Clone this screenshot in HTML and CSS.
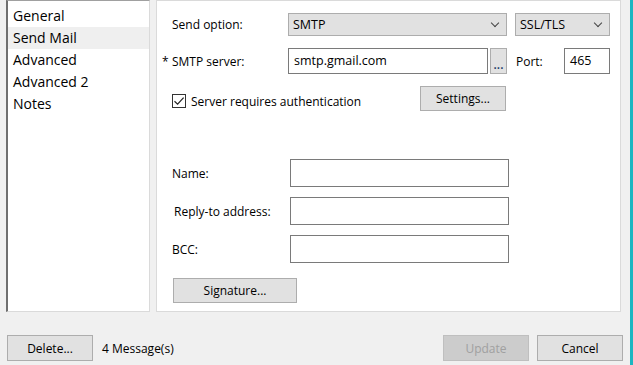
FILE: index.html
```html
<!DOCTYPE html>
<html lang="en">
<head>
    <meta charset="UTF-8">
    <title>Account Settings - Send Mail</title>
    <link rel="stylesheet" href="styles.css">
</head>
<body>

    <div class="janela">
        <div class="area-topo">
            <ul class="lista-abas">
                <li>General</li>
                <li class="ativa">Send Mail</li>
                <li>Advanced</li>
                <li>Advanced 2</li>
                <li>Notes</li>
            </ul>

            <div class="painel">
                <div class="linha linha-envio">
                    <span class="rotulo">Send option:</span>
                    <div class="combo combo-largo">SMTP <span class="seta"></span></div>
                    <div class="combo combo-ssl">SSL/TLS <span class="seta"></span></div>
                </div>

                <div class="linha linha-servidor">
                    <span class="asterisco">*</span>
                    <span class="rotulo">SMTP server:</span>
                    <div class="campo campo-servidor">smtp.gmail.com</div>
                    <button class="botao botao-pontos">...</button>
                    <span class="rotulo-porta">Port:</span>
                    <div class="campo campo-porta">465</div>
                </div>

                <div class="linha linha-auth">
                    <label class="checagem">
                        <span class="caixa">
                            <svg width="12" height="12" viewBox="0 0 12 12"><path d="M1.5 6.2 L4.6 9.2 L10.6 2.6" fill="none" stroke="#222" stroke-width="1.2"/></svg>
                        </span>
                        Server requires authentication
                    </label>
                    <button class="botao botao-settings">Settings...</button>
                </div>

                <div class="grupo-identidade">
                    <div class="linha-id">
                        <span class="rotulo-id">Name:</span>
                        <div class="campo campo-id"></div>
                    </div>
                    <div class="linha-id">
                        <span class="rotulo-id recuo">Reply-to address:</span>
                        <div class="campo campo-id"></div>
                    </div>
                    <div class="linha-id">
                        <span class="rotulo-id">BCC:</span>
                        <div class="campo campo-id"></div>
                    </div>
                </div>

                <button class="botao botao-assinatura">Signature...</button>
            </div>
        </div>

        <div class="rodape">
            <button class="botao botao-rodape">Delete...</button>
            <span class="contagem">4 Message(s)</span>
            <button class="botao botao-rodape desativado">Update</button>
            <button class="botao botao-rodape">Cancel</button>
        </div>
    </div>

    <div class="faixa"></div>

</body>
</html>
```

FILE: styles.css
```css
/* --- Base --- */
:root {
    --cor-fundo: #f0f0f0;
    --cor-botao: #e1e1e1;
    --cor-borda-botao: #adadad;
    --cor-borda-campo: #7a7a7a;
    --font-principal: 'Open Sans', 'Noto Sans', sans-serif;
}

* {
    margin: 0;
    padding: 0;
    box-sizing: border-box;
}

body {
    font-family: var(--font-principal);
    font-size: 12px;
    color: #000;
    background-color: var(--cor-fundo);
    width: 633px;
    height: 365px;
    overflow: hidden;
    display: flex;
}

.janela {
    width: 630px;
    height: 365px;
    display: flex;
    flex-direction: column;
}

.faixa {
    width: 3px;
    height: 365px;
    background: #1bb6c1;
}

/* --- Topo: lista + painel --- */
.area-topo {
    display: flex;
    gap: 6px;
    padding-left: 6px;
    height: 312px;
}

.lista-abas {
    list-style: none;
    width: 144px;
    height: 312px;
    background: #fff;
    border-left: 2px solid #6f6f6f;
    border-top: 1px solid #a0a0a0;
    border-right: 1px solid #dadada;
    border-bottom: 1px solid #dadada;
    padding-top: 4px;
    font-size: 14px;
}

.lista-abas li {
    height: 22px;
    line-height: 22px;
    padding-left: 5px;
}

.lista-abas li.ativa {
    background: #efefef;
}

.painel {
    width: 465px;
    height: 312px;
    background: #fff;
    border: 1px solid #dadada;
    padding: 12px 0 0 15px;
}

.linha {
    display: flex;
    align-items: center;
}

.rotulo {
    width: 116px;
}

.combo {
    position: relative;
    height: 23px;
    line-height: 21px;
    background: var(--cor-botao);
    border: 1px solid var(--cor-borda-botao);
    padding-left: 4px;
    font-size: 12.5px;
}

.combo-largo {
    width: 219px;
    margin-right: 8px;
}

.combo-ssl {
    width: 95px;
}

.seta {
    position: absolute;
    right: 8px;
    top: 6px;
    width: 6px;
    height: 6px;
    border-right: 1px solid #444;
    border-bottom: 1px solid #444;
    transform: rotate(45deg);
}

/* --- Servidor --- */
.linha-servidor {
    margin-top: 12px;
    margin-left: -10px;
}

.asterisco {
    width: 10px;
}

.campo {
    height: 26px;
    background: #fff;
    border: 1px solid var(--cor-borda-campo);
    padding: 3px 5px 0;
    font-size: 12.5px;
}

.campo-servidor {
    width: 200px;
    margin-right: 2px;
}

.botao {
    font-family: var(--font-principal);
    font-size: 12px;
    color: #000;
    background: var(--cor-botao);
    border: 1px solid var(--cor-borda-botao);
}

.botao-pontos {
    width: 17px;
    height: 26px;
    padding-top: 6px;
    font-weight: 600;
    color: #1a3a66;
}

.rotulo-porta {
    margin-left: 9px;
    width: 48px;
}

.campo-porta {
    width: 46px;
}

/* --- Autenticação --- */
.linha-auth {
    margin-top: 12px;
    height: 25px;
}

.checagem {
    display: flex;
    align-items: center;
    gap: 5px;
    width: 248px;
    margin-top: 5px;
}

.caixa {
    width: 14px;
    height: 14px;
    border: 1px solid #333;
    display: flex;
    align-items: center;
    justify-content: center;
}

.botao-settings {
    width: 86px;
    height: 25px;
}

/* --- Identidade --- */
.grupo-identidade {
    margin-top: 48px;
    display: flex;
    flex-direction: column;
    gap: 10px;
}

.linha-id {
    display: flex;
    align-items: center;
}

.rotulo-id {
    width: 118px;
}

.rotulo-id.recuo {
    padding-left: 2px;
}

.campo-id {
    width: 219px;
    height: 28px;
}

.botao-assinatura {
    display: block;
    margin-top: 15px;
    margin-left: 1px;
    width: 124px;
    height: 25px;
}

/* --- Rodapé --- */
.rodape {
    display: flex;
    align-items: center;
    padding: 23px 7px 0 7px;
}

.botao-rodape {
    width: 86px;
    height: 26px;
}

.contagem {
    margin-left: 9px;
    flex: 1;
}

.botao-rodape.desativado {
    background: #cccccc;
    border-color: #bfbfbf;
    color: #a0a0a0;
    margin-right: 8px;
}
```
